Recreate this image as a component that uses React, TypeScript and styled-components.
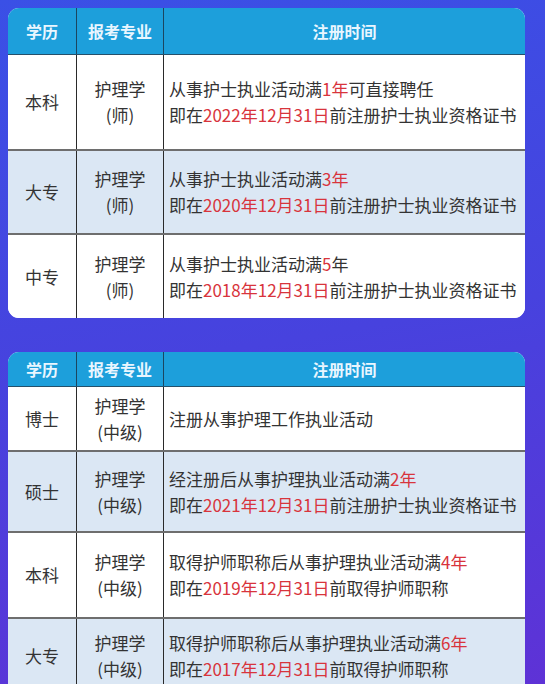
import React from "react";
import styled, { createGlobalStyle } from "styled-components";

const GlobalStyle = createGlobalStyle`
  html, body {
    margin: 0;
    padding: 0;
  }
  body {
    width: 545px;
    height: 684px;
    overflow: hidden;
    font-family: "Noto Sans CJK SC", "Noto Sans", sans-serif;
    color: #333;
  }
`;

const Page = styled.div`
  box-sizing: border-box;
  width: 545px;
  height: 684px;
  padding: 8px 20px 0 8px;
  background: linear-gradient(170deg, #3a50e6 0%, #4742de 50%, #5e32d6 100%);
  display: flex;
  flex-direction: column;
  gap: 34px;
`;

const Table = styled.div`
  background: #fff;
  border-radius: 11px;
  overflow: hidden;
  flex-shrink: 0;
`;

const Row = styled.div<{ $h: number; $alt?: boolean }>`
  box-sizing: border-box;
  display: grid;
  grid-template-columns: 68px 87px 1fr;
  height: ${(p) => p.$h}px;
  background: ${(p) => (p.$alt ? "#dbe7f4" : "#fff")};
  border-top: 2px solid #6e6e6e;
`;

const HeadRow = styled.div<{ $h: number }>`
  box-sizing: border-box;
  display: grid;
  grid-template-columns: 68px 87px 1fr;
  height: ${(p) => p.$h}px;
  background: #1d9fdb;
  border-bottom: 1px solid #25506a;
  & + ${Row} {
    border-top: none;
  }
`;

const HeadCell = styled.div<{ $first?: boolean }>`
  display: flex;
  align-items: center;
  justify-content: center;
  font-size: 16px;
  font-weight: 700;
  color: #e9f6ff;
  border-left: ${(p) => (p.$first ? "none" : "1px solid #1b4660")};
`;

const Cell = styled.div<{ $first?: boolean; $left?: boolean }>`
  display: flex;
  flex-direction: column;
  align-items: ${(p) => (p.$left ? "flex-start" : "center")};
  justify-content: center;
  padding-left: ${(p) => (p.$left ? "5px" : "0")};
  font-size: 17px;
  line-height: 26px;
  text-align: ${(p) => (p.$left ? "left" : "center")};
  border-left: ${(p) => (p.$first ? "none" : "1px solid #2a2a2a")};
  white-space: nowrap;
`;

const Red = styled.span`
  color: #d8343c;
`;

type Line = (string | { r: string })[];

type Entry = {
  degree: string;
  major: string;
  lines: Line[];
  h: number;
};

const first: Entry[] = [
  {
    degree: "本科",
    major: "(师)",
    h: 94,
    lines: [
      ["从事护士执业活动满", { r: "1年" }, "可直接聘任"],
      ["即在", { r: "2022年12月31日" }, "前注册护士执业资格证书"],
    ],
  },
  {
    degree: "大专",
    major: "(师)",
    h: 84,
    lines: [
      ["从事护士执业活动满", { r: "3年" }],
      ["即在", { r: "2020年12月31日" }, "前注册护士执业资格证书"],
    ],
  },
  {
    degree: "中专",
    major: "(师)",
    h: 85,
    lines: [
      ["从事护士执业活动满", { r: "5" }, "年"],
      ["即在", { r: "2018年12月31日" }, "前注册护士执业资格证书"],
    ],
  },
];

const second: Entry[] = [
  {
    degree: "博士",
    major: "(中级)",
    h: 63,
    lines: [["注册从事护理工作执业活动"]],
  },
  {
    degree: "硕士",
    major: "(中级)",
    h: 81,
    lines: [
      ["经注册后从事护理执业活动满", { r: "2年" }],
      ["即在", { r: "2021年12月31日" }, "前注册护士执业资格证书"],
    ],
  },
  {
    degree: "本科",
    major: "(中级)",
    h: 86,
    lines: [
      ["取得护师职称后从事护理执业活动满", { r: "4年" }],
      ["即在", { r: "2019年12月31日" }, "前取得护师职称"],
    ],
  },
  {
    degree: "大专",
    major: "(中级)",
    h: 76,
    lines: [
      ["取得护师职称后从事护理执业活动满", { r: "6年" }],
      ["即在", { r: "2017年12月31日" }, "前取得护师职称"],
    ],
  },
];

const renderLine = (line: Line, i: number) => (
  <div key={i}>
    {line.map((part, j) =>
      typeof part === "string" ? (
        <React.Fragment key={j}>{part}</React.Fragment>
      ) : (
        <Red key={j}>{part.r}</Red>
      )
    )}
  </div>
);

const RuleTable = ({ rows, headH }: { rows: Entry[]; headH: number }) => (
  <Table>
    <HeadRow $h={headH}>
      <HeadCell $first>学历</HeadCell>
      <HeadCell>报考专业</HeadCell>
      <HeadCell>注册时间</HeadCell>
    </HeadRow>
    {rows.map((row, i) => (
      <Row key={i} $h={row.h} $alt={i % 2 === 1}>
        <Cell $first>{row.degree}</Cell>
        <Cell>
          <div>护理学</div>
          <div>{row.major}</div>
        </Cell>
        <Cell $left>{row.lines.map(renderLine)}</Cell>
      </Row>
    ))}
  </Table>
);

const App = () => (
  <>
    <GlobalStyle />
    <Page>
      <RuleTable rows={first} headH={47} />
      <RuleTable rows={second} headH={35} />
    </Page>
  </>
);

export default App;
